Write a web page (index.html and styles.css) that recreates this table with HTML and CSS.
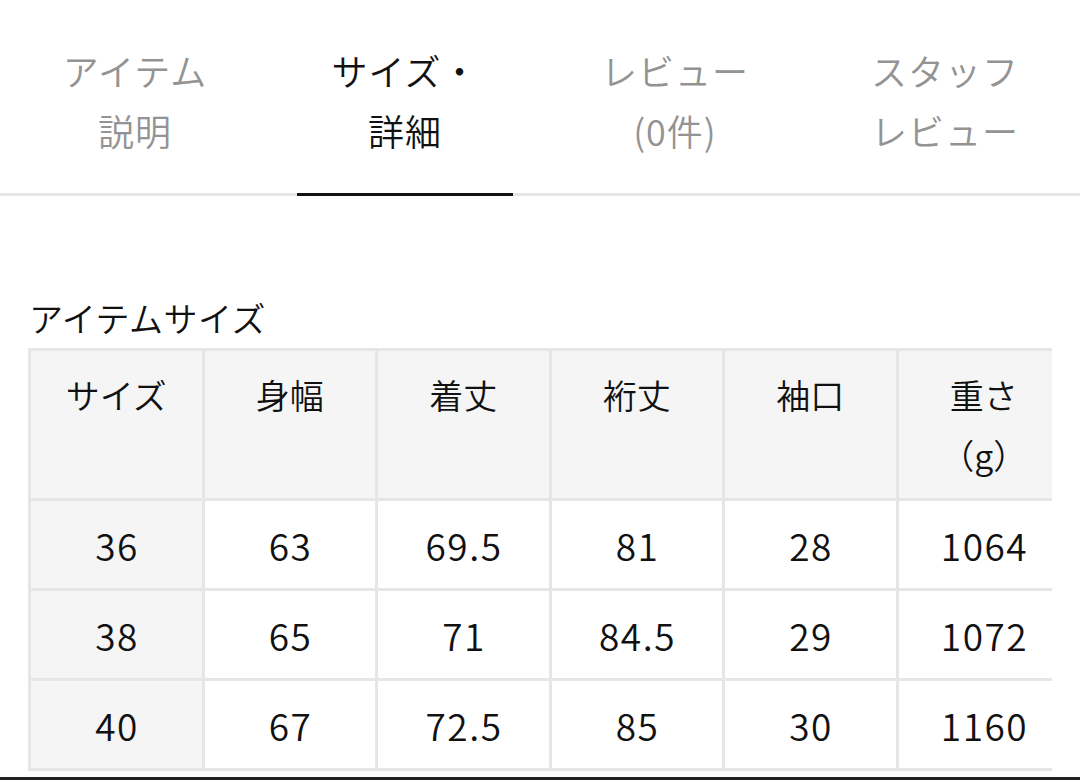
FILE: index.html
```html
<!DOCTYPE html>
<html lang="ja">
<head>
<meta charset="utf-8">
<link rel="stylesheet" href="styles.css">
</head>
<body>
<nav class="tabs">
  <div class="tab">アイテム<br>説明</div>
  <div class="tab active">サイズ・<br>詳細</div>
  <div class="tab">レビュー<br>(0件)</div>
  <div class="tab">スタッフ<br>レビュー</div>
</nav>
<section class="size">
  <h2 class="title">アイテムサイズ</h2>
  <div class="table-wrap">
    <table class="size-table">
      <thead>
        <tr><th>サイズ</th><th>身幅</th><th>着丈</th><th>裄丈</th><th>袖口</th><th>重さ<br>（g）</th></tr>
      </thead>
      <tbody>
        <tr><th class="num">36</th><td class="num">63</td><td class="num">69.5</td><td class="num">81</td><td class="num">28</td><td class="num">1064</td></tr>
        <tr><th class="num">38</th><td class="num">65</td><td class="num">71</td><td class="num">84.5</td><td class="num">29</td><td class="num">1072</td></tr>
        <tr><th class="num">40</th><td class="num">67</td><td class="num">72.5</td><td class="num">85</td><td class="num">30</td><td class="num">1160</td></tr>
      </tbody>
    </table>
  </div>
</section>
<div class="bottom-bar"></div>
</body>
</html>
```
FILE: styles.css
```css
html, body {
  margin: 0;
  padding: 0;
  background: #fff;
}
body {
  font-family: "Noto Sans CJK JP", "Noto Sans", sans-serif;
  font-weight: 350;
  color: #111;
  width: 1080px;
  height: 780px;
  overflow: hidden;
}
.tabs {
  display: flex;
  border-bottom: 3px solid #e6e6e6;
}
.tab {
  flex: 1;
  text-align: center;
  font-size: 36px;
  line-height: 60px;
  letter-spacing: 1px;
  color: #939393;
  padding: 40px 0 33px;
  margin-bottom: -3px;
  border-bottom: 3px solid transparent;
  position: relative;
}
.tab.active {
  color: #111;
}
.tab.active::after {
  content: "";
  position: absolute;
  left: 27px;
  right: 27px;
  bottom: -3px;
  height: 3px;
  background: #111;
}
.size {
  padding: 0 0 0 28px;
}
.title {
  margin: 97px 0 5px 1px;
  font-size: 34px;
  font-weight: 350;
  line-height: 50px;
  letter-spacing: 0.5px;
  color: #111;
}
.table-wrap {
  width: 1024px;
  overflow: hidden;
}
.size-table {
  border-collapse: collapse;
  table-layout: fixed;
  width: 1044px;
}
.size-table th,
.size-table td {
  border: 3px solid #e6e6e6;
  font-size: 34px;
  font-weight: 350;
  line-height: 60px;
  padding: 13.5px 0;
  text-align: center;
  vertical-align: top;
  color: #111;
}
.size-table thead th,
.size-table tbody th {
  background: #f5f5f5;
}
.size-table td {
  background: #fff;
}
.size-table .num {
  font-size: 37px;
  letter-spacing: 1.5px;
  text-indent: 1.5px;
}
.bottom-bar {
  margin-top: 6px;
  height: 4px;
  background: #222;
}
```
